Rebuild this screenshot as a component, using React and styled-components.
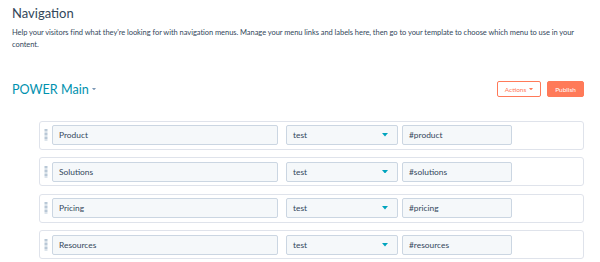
import React from 'react';
import styled, { createGlobalStyle } from 'styled-components';

const GlobalStyle = createGlobalStyle`
  html, body {
    margin: 0;
    padding: 0;
    background: #ffffff;
  }
  body {
    font-family: Lato, "Open Sans", sans-serif;
    color: #33475b;
  }
`;

const items = [
  { label: 'Product', target: 'test', url: '#product' },
  { label: 'Solutions', target: 'test', url: '#solutions' },
  { label: 'Pricing', target: 'test', url: '#pricing' },
  { label: 'Resources', target: 'test', url: '#resources' },
];

const DragHandle = () => (
  <Handle width="4" height="12" viewBox="0 0 4 12">
    {Array.from({ length: 9 }).map((_, i) => (
      <rect key={i} x="0.5" y={i * 1.33} width="3" height="0.7" fill="#99afc4" />
    ))}
  </Handle>
);

const Caret = ({ color, size }) => (
  <svg width={size} height={size * 0.6} viewBox="0 0 10 6">
    <path d="M0 0 L10 0 L5 6 Z" fill={color} />
  </svg>
);

const App = () => {
  return (
    <Page>
      <GlobalStyle />
      <Title>Navigation</Title>
      <Description>
        Help your visitors find what they're looking for with navigation menus. Manage your menu
        links and labels here, then go to your template to choose which menu to use in your
        content.
      </Description>

      <Header>
        <MenuName>
          POWER Main
          <Caret color="#7c98b6" size={4} />
        </MenuName>
        <Buttons>
          <OutlineButton>
            Actions
            <Caret color="#ff7a59" size={4} />
          </OutlineButton>
          <PrimaryButton>Publish</PrimaryButton>
        </Buttons>
      </Header>

      {/* menu items */}
      <RowList>
        {items.map(item => (
          <Row key={item.label}>
            <DragHandle />
            <TextField $width={226}>{item.label}</TextField>
            <SelectField>
              {item.target}
              <Caret color="#00a4bd" size={6} />
            </SelectField>
            <TextField $width={110}>{item.url}</TextField>
          </Row>
        ))}
      </RowList>
    </Page>
  );
};

export default App;

const Page = styled.div`
  width: 600px;
  height: 262px;
  box-sizing: border-box;
  padding: 4px 16px 0 12px;
  overflow: hidden;
`;

const Title = styled.h1`
  margin: 0;
  font-size: 13px;
  font-weight: 400;
  line-height: 18px;
  color: #33475b;
`;

const Description = styled.p`
  margin: 5px 0 0;
  font-size: 7.5px;
  letter-spacing: -0.05px;
  line-height: 12px;
  color: #33475b;
`;

const Header = styled.div`
  display: flex;
  justify-content: space-between;
  align-items: center;
  margin-top: 30px;
  height: 16px;
`;

const MenuName = styled.div`
  display: flex;
  align-items: center;
  gap: 3px;
  font-size: 12.6px;
  color: #0091ae;
`;

const Buttons = styled.div`
  display: flex;
  gap: 6px;
`;

const ButtonBase = styled.button`
  box-sizing: border-box;
  height: 16px;
  border-radius: 2px;
  font-family: inherit;
  font-size: 6.5px;
  display: flex;
  align-items: center;
  justify-content: center;
  gap: 3px;
  padding: 0;
  cursor: pointer;
`;

const OutlineButton = styled(ButtonBase)`
  width: 44px;
  border: 1px solid #ff7a59;
  background: #ffffff;
  color: #ff7a59;
`;

const PrimaryButton = styled(ButtonBase)`
  width: 37px;
  border: 1px solid #ff7a59;
  background: #ff7a59;
  color: #ffffff;
`;

const RowList = styled.div`
  display: flex;
  flex-direction: column;
  gap: 7.6px;
  margin: 23.5px 0 0 27px;
`;

const Row = styled.div`
  box-sizing: border-box;
  height: 29px;
  display: flex;
  align-items: center;
  padding-left: 4px;
  border: 1px solid #dfe3eb;
  border-radius: 3px;
  background: #ffffff;
`;

const Handle = styled.svg`
  flex: none;
  margin-right: 4px;
`;

const FieldBase = styled.div`
  box-sizing: border-box;
  height: 20px;
  display: flex;
  align-items: center;
  padding: 0 6px;
  border: 1px solid #cbd6e2;
  border-radius: 2px;
  background: #f5f8fa;
  font-size: 8.4px;
  color: #33475b;
`;

const TextField = styled(FieldBase)`
  width: ${p => p.$width}px;
`;

const SelectField = styled(FieldBase)`
  width: 112px;
  margin: 0 4px 0 8px;
  justify-content: space-between;
  padding-right: 9px;
`;
